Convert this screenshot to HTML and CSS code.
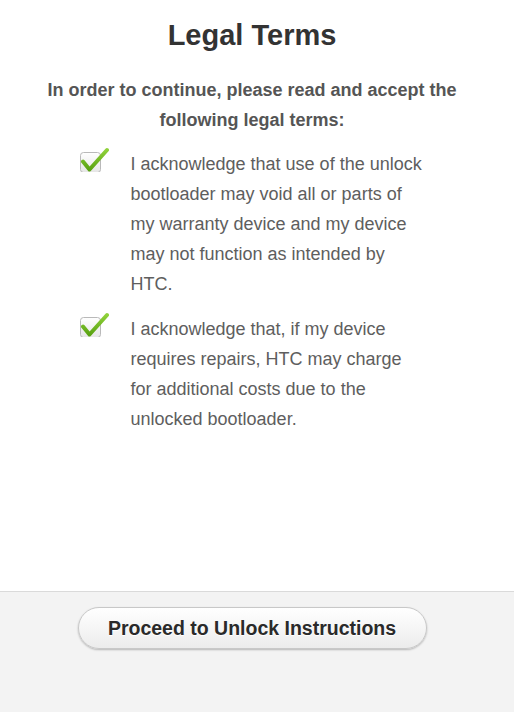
FILE: index.html
```html
<!DOCTYPE html>
<html lang="en">
<head>
<meta charset="utf-8">
<title>Legal Terms</title>
<link rel="stylesheet" href="styles.css">
</head>
<body>
<div class="page">
  <main class="content">
    <h1 class="title">Legal Terms</h1>
    <p class="intro">In order to continue, please read and accept the following legal terms:</p>
    <ul class="terms">
      <li class="term">
        <svg class="check" width="30" height="30" viewBox="0 0 30 30" aria-hidden="true">
          <defs>
            <linearGradient id="boxg" x1="0" y1="0" x2="0" y2="1">
              <stop offset="0" stop-color="#ffffff"/>
              <stop offset="1" stop-color="#e6e6e6"/>
            </linearGradient>
            <linearGradient id="chkg" x1="0" y1="0" x2="0" y2="1">
              <stop offset="0" stop-color="#8fd13a"/>
              <stop offset="1" stop-color="#5aa312"/>
            </linearGradient>
          </defs>
          <rect x="1.5" y="10.5" width="20" height="20" rx="3" fill="url(#boxg)" stroke="#b9b9b9"/>
          <path d="M4 19.5 L10.5 27.5 L28 8" fill="none" stroke="url(#chkg)" stroke-width="4" stroke-linecap="round" stroke-linejoin="round"/>
        </svg>
        <span class="term-text">I acknowledge that use of the unlock bootloader may void all or parts of my warranty device and my device may not function as intended by HTC.</span>
      </li>
      <li class="term">
        <svg class="check" width="30" height="30" viewBox="0 0 30 30" aria-hidden="true">
          <rect x="1.5" y="10.5" width="20" height="20" rx="3" fill="url(#boxg)" stroke="#b9b9b9"/>
          <path d="M4 19.5 L10.5 27.5 L28 8" fill="none" stroke="url(#chkg)" stroke-width="4" stroke-linecap="round" stroke-linejoin="round"/>
        </svg>
        <span class="term-text">I acknowledge that, if my device requires repairs, HTC may charge for additional costs due to the unlocked bootloader.</span>
      </li>
    </ul>
  </main>
  <footer class="actions">
    <button class="proceed" type="button">Proceed to Unlock Instructions</button>
  </footer>
</div>
</body>
</html>
```

FILE: styles.css
```css
html, body {
  margin: 0;
  padding: 0;
  background: #ffffff;
}

body {
  font-family: "Liberation Sans", Arial, sans-serif;
}

.page {
  width: 514px;
  height: 712px;
  display: flex;
  flex-direction: column;
}

.content {
  height: 591px;
  box-sizing: border-box;
  padding: 17px 10px 0 0;
}

.title {
  margin: 0;
  text-align: center;
  font-size: 29px;
  line-height: 36px;
  font-weight: bold;
  color: #333333;
}

.intro {
  width: 440px;
  margin: 22px auto 0;
  text-align: center;
  font-size: 18px;
  line-height: 30px;
  font-weight: bold;
  color: #555555;
}

.terms {
  list-style: none;
  width: 347px;
  margin: 14px auto 0;
  padding: 0;
  display: flex;
  flex-direction: column;
  gap: 15px;
}

.term {
  display: flex;
  align-items: flex-start;
}

.check {
  flex: none;
  margin-top: -7px;
  margin-right: 22px;
}

.term-text {
  width: 295px;
  font-size: 18px;
  line-height: 30px;
  color: #5e5e5e;
}

.actions {
  flex: none;
  height: 121px;
  box-sizing: border-box;
  border-top: 1px solid #dadada;
  background: #f3f3f3;
  padding: 15px 10px 0 0;
  display: flex;
  justify-content: center;
  align-items: flex-start;
}

.proceed {
  width: 349px;
  height: 42px;
  border: 1px solid #c8c8c8;
  border-radius: 21px;
  background: linear-gradient(#ffffff, #ececec);
  box-shadow: 0 1px 2px rgba(0, 0, 0, 0.25);
  font-family: "Liberation Sans", Arial, sans-serif;
  font-size: 19.5px;
  font-weight: bold;
  color: #2a2a2a;
  text-shadow: 0 1px 0 #ffffff;
  padding: 0;
  cursor: pointer;
}
```
